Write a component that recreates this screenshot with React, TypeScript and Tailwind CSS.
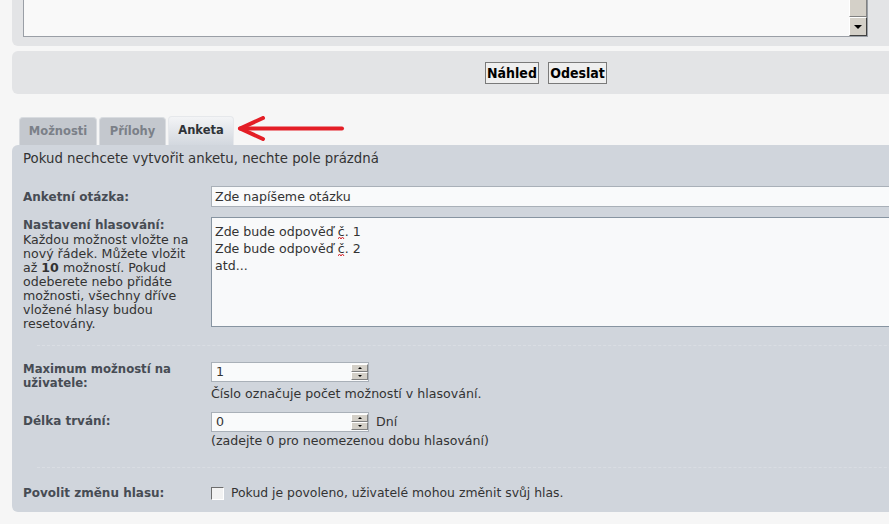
import React from 'react';

const SpinBox: React.FC<{ value: string }> = ({ value }) => (
    <div className="relative shrink-0 w-[158px] h-[20px] bg-[#f9fafb] border border-[#a9b0b8] pl-[4px] text-[12.6px] leading-[18px] text-[#333]">
        {value}
        {/* spinner buttons */}
        <div className="absolute right-0 top-0 bottom-0 w-[17px] flex flex-col py-[1px]">
            <div className="flex-1 bg-[#d4d0c8] border-t border-l border-t-white border-l-white border-b border-r border-b-[#808080] border-r-[#808080] flex items-center justify-center">
                <span className="block w-0 h-0 border-x-[2px] border-x-transparent border-b-[2px] border-b-black" />
            </div>
            <div className="flex-1 bg-[#d4d0c8] border-t border-l border-t-white border-l-white border-b border-r border-b-[#808080] border-r-[#808080] flex items-center justify-center">
                <span className="block w-0 h-0 border-x-[2px] border-x-transparent border-t-[2px] border-t-black" />
            </div>
        </div>
    </div>
);

const Separator: React.FC = () => (
    <div className="ml-[14px] border-t border-dashed border-[#d9dde3]" />
);

// spell-check squiggle under a letter
const Misspelled: React.FC<{ children: React.ReactNode }> = ({ children }) => (
    <span className="relative inline-block">
        {children}
        <svg className="absolute left-0 top-[13px]" width="7" height="4" viewBox="0 0 7 4">
            <path d="M0 3 L1.5 1 L3 3 L4.5 1 L6 3" stroke="#d4282e" strokeWidth="1" fill="none" />
        </svg>
    </span>
);

export default function App() {
    return (
        <div className="w-[889px] h-[524px] overflow-hidden bg-[#f6f6f6] font-['DejaVu_Sans',Verdana,sans-serif]">
            {/* Message editor (cut off at top) */}
            <div className="ml-[12px] h-[46px] bg-[#e3e4e6] rounded-bl-[6px] pl-[11px] pr-[21px]">
                <div className="h-[37px] bg-[#f9f9f9] border-x border-b border-[#9a9fa6] flex justify-end">
                    <div className="w-[18px] flex flex-col">
                        <div className="h-[17px] bg-[#d4d0c8] border-l border-r border-b border-l-white border-r-[#808080] border-b-[#808080]" />
                        <div className="flex-1 bg-[#d4d0c8] border-t border-l border-t-white border-l-white border-r border-b border-r-[#404040] border-b-[#404040] flex items-center justify-center">
                            <span className="block w-0 h-0 border-x-[4px] border-x-transparent border-t-[4px] border-t-black" />
                        </div>
                    </div>
                </div>
            </div>

            {/* Buttons */}
            <div className="mt-[5px] ml-[12px] w-[1070px] h-[43px] bg-[#e3e4e6] rounded-[6px] flex items-center pl-[473px] gap-[9px] font-['Liberation_Sans_Narrow','DejaVu_Sans_Condensed',sans-serif]">
                <button className="w-[54px] h-[22px] bg-[#efefef] border border-[#7a7a7a] text-[14px] font-bold text-black leading-none">
                    Náhled
                </button>
                <button className="w-[59px] h-[22px] bg-[#efefef] border border-[#7a7a7a] text-[14px] font-bold text-black leading-none">
                    Odeslat
                </button>
            </div>

            {/* Tabs */}
            <div className="mt-[22px] ml-[19px] h-[29px] flex items-end text-[11.5px] font-bold">
                <div className="w-[78px] h-[28px] rounded-t-[4px] bg-[#c4c8ce] border-t border-x border-[#d9dce0] text-[#7b8088] flex items-center justify-center">
                    Možnosti
                </div>
                <div className="ml-[2px] w-[67px] h-[28px] rounded-t-[4px] bg-[#c4c8ce] border-t border-x border-[#d9dce0] text-[#7b8088] flex items-center justify-center">
                    Přílohy
                </div>
                <div className="ml-[2px] w-[66px] h-[29px] rounded-t-[4px] bg-gradient-to-b from-[#f3f4f6] to-[#d3d8df] border-t border-x border-[#e6e8eb] text-[#2f3338] flex items-center justify-center">
                    Anketa
                </div>
                <svg className="ml-[3px] self-start" width="108" height="25" viewBox="0 0 108 25">
                    <g stroke="#e41e26" strokeWidth="4" strokeLinecap="round" strokeLinejoin="round" fill="none">
                        <path d="M3 12.5 L105 12.5" />
                        <path d="M26 2 L3 12.5 L26 23" />
                    </g>
                </svg>
            </div>

            {/* Poll panel */}
            <div className="ml-[12px] w-[1000px] h-[367px] bg-[#d0d5dc] rounded-tl-[6px] rounded-bl-[6px] pl-[11px] pt-[6px] text-[12.6px] text-[#333]">
                <div className="text-[13.3px] leading-[16px]">Pokud nechcete vytvořit anketu, nechte pole prázdná</div>

                {/* Question */}
                <div className="mt-[19px] flex items-center">
                    <div className="w-[188px] shrink-0 text-[12px] font-bold text-[#474c54]">Anketní otázka:</div>
                    <div className="w-[760px] shrink-0 h-[21px] bg-[#f9fafb] border border-[#a9b0b8] pl-[3px] leading-[19px]">
                        Zde napíšeme otázku
                    </div>
                </div>

                {/* Options */}
                <div className="mt-[10px] flex items-start">
                    <div className="w-[188px] shrink-0 whitespace-nowrap">
                        <div className="text-[12px] font-bold text-[#474c54] leading-[16px]">Nastavení hlasování:</div>
                        <div className="leading-[14px]">
                            <div>Každou možnost vložte na</div>
                            <div>nový řádek. Můžete vložit</div>
                            <div>až <b>10</b> možností. Pokud</div>
                            <div>odeberete nebo přidáte</div>
                            <div>možnosti, všechny dříve</div>
                            <div>vložené hlasy budou</div>
                            <div>resetovány.</div>
                        </div>
                    </div>
                    <div className="w-[760px] shrink-0 h-[110px] bg-[#f8f9fa] border border-[#8794a1] pl-[3px] pt-[5px] leading-[17px]">
                        <div>Zde bude odpověď <Misspelled>č</Misspelled>. 1</div>
                        <div>Zde bude odpověď <Misspelled>č</Misspelled>. 2</div>
                        <div>atd...</div>
                    </div>
                </div>

                <div className="mt-[14px]">
                    <Separator />
                </div>

                {/* Max options */}
                <div className="mt-[16px] flex items-start">
                    <div className="w-[188px] shrink-0 text-[11.7px] font-bold text-[#474c54] leading-[14px]">
                        Maximum možností na
                        <br />
                        uživatele:
                    </div>
                    <div>
                        <SpinBox value="1" />
                        <div className="mt-[5px] leading-[14px]">Číslo označuje počet možností v hlasování.</div>
                    </div>
                </div>

                {/* Duration */}
                <div className="mt-[11px] flex items-start">
                    <div className="w-[188px] shrink-0 pt-[2px] text-[12px] font-bold text-[#474c54] leading-[14px]">Délka trvání:</div>
                    <div>
                        <div className="flex items-center gap-[7px]">
                            <SpinBox value="0" />
                            <span>Dní</span>
                        </div>
                        <div className="mt-[2px] leading-[14px]">(zadejte 0 pro neomezenou dobu hlasování)</div>
                    </div>
                </div>

                <div className="mt-[19px]">
                    <Separator />
                </div>

                {/* Allow change */}
                <div className="mt-[18px] flex items-center">
                    <div className="w-[188px] shrink-0 text-[12px] font-bold text-[#474c54] leading-[14px]">Povolit změnu hlasu:</div>
                    <div className="w-[13px] h-[13px] shrink-0 bg-[#f2f2f2] border-t border-l border-t-[#6d6d6d] border-l-[#6d6d6d] border-r border-b border-r-[#ffffff] border-b-[#ffffff]" />
                    <span className="ml-[7px] text-[12.4px] leading-[14px]">Pokud je povoleno, uživatelé mohou změnit svůj hlas.</span>
                </div>
            </div>
        </div>
    );
}
